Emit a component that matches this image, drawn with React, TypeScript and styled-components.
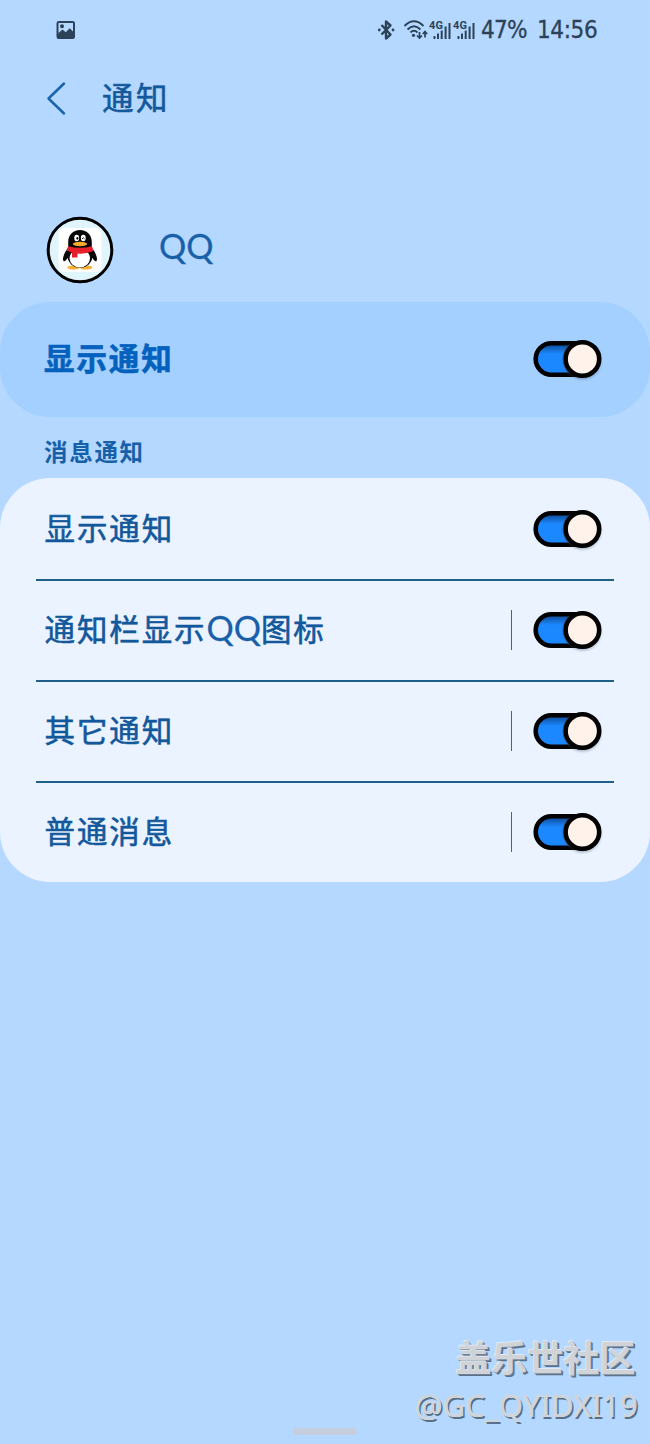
import React from "react";
import styled, { createGlobalStyle } from "styled-components";

const Global = createGlobalStyle`
  * { box-sizing: border-box; }
  body { margin: 0; background: #b4d8ff; }
`;

const cjk = `"Noto Sans CJK SC", sans-serif`;

const Screen = styled.div`
  position: relative;
  width: 650px;
  height: 1444px;
  overflow: hidden;
  background: #b4d8ff;
  color: #14589c;
  font-family: ${cjk};
  display: flex;
  flex-direction: column;
`;

const StatusBar = styled.header`
  height: 60px;
  display: flex;
  align-items: center;
  justify-content: space-between;
  padding: 0 52px 0 56px;
  color: #2c4258;
`;

const StatusGroup = styled.div`
  display: flex;
  align-items: center;
`;

const StatusText = styled.span<{ $width: number; $spacing: number }>`
  width: ${(p) => p.$width}px;
  font: 24px/30px "DejaVu Sans Condensed", "DejaVu Sans", sans-serif;
  font-stretch: condensed;
  letter-spacing: ${(p) => p.$spacing}px;
  -webkit-text-stroke: 0.3px;
  white-space: nowrap;
`;

const TitleBar = styled.div`
  height: 76px;
  display: flex;
  align-items: center;
  gap: 36px;
  padding-left: 46px;
`;

const Label = styled.span<{ $strong?: boolean; $title?: boolean }>`
  flex: 1;
  display: flex;
  align-items: center;
  padding-bottom: 4px;
  font-size: ${(p) => (p.$title ? 31.5 : 30.5)}px;
  line-height: 40px;
  letter-spacing: ${(p) => (p.$title ? 2.4 : 1.9)}px;
  font-weight: ${(p) => (p.$strong ? 700 : 400)};
  color: ${(p) => (p.$strong ? "#0461be" : "#14589c")};
  -webkit-text-stroke: 0.6px;
  white-space: nowrap;
`;

const Latin = styled.span`
  font: 34px/40px Lato, sans-serif;
  letter-spacing: 0;
  color: #1860a8;
  -webkit-text-stroke: 0.3px;
`;

const AppHeader = styled.div`
  height: 84px;
  margin-top: 72px;
  padding-left: 46px;
  display: flex;
  align-items: center;
  gap: 45px;
`;

const AppName = styled.div`
  margin-top: -9px;
`;

const MasterRow = styled.div`
  height: 115px;
  margin-top: 10px;
  border-radius: 50px;
  background: #a3d0ff;
  display: flex;
  align-items: center;
  padding: 0 48px 1px 44px;
`;

const SectionTitle = styled.h2`
  height: 61px;
  margin: 0;
  padding: 17px 0 0 44px;
  font-size: 23.5px;
  line-height: 34px;
  font-weight: 700;
  letter-spacing: 1.7px;
  color: #1760a9;
`;

const Card = styled.section`
  height: 404px;
  border-radius: 50px;
  background: #eaf3ff;
  padding: 0 36px;
`;

const Row = styled.div`
  height: 101px;
  display: flex;
  align-items: center;
  padding: 0 12px 2px 8.5px;
  &:first-child {
    height: 103px;
    padding-bottom: 0;
  }
  &:not(:last-child) {
    border-bottom: 2px solid #1f5f88;
  }
  &:last-child {
    height: 99px;
  }
`;

const Separator = styled.i`
  width: 1px;
  height: 40px;
  margin-right: 21px;
  background: #2f6c96;
`;

const Track = styled.span`
  width: 69px;
  height: 38px;
  display: flex;
  align-items: center;
  justify-content: space-between;
`;

const ToggleArt = styled.svg`
  display: block;
  overflow: visible;
`;

const Watermark = styled.div`
  position: absolute;
  right: 12px;
  bottom: 16px;
  text-align: right;
  white-space: nowrap;
  color: #d0d3d7;
  text-shadow: -1px -1px 0 #e0e9f3, 1px 1px 0 #6f8297, 2px 2px 0 #587089;
`;

const Community = styled.div`
  font: 700 36px/48px ${cjk};
  margin-right: 2.5px;
  margin-bottom: 2px;
`;

const Author = styled.div`
  font: 31px/46px "Noto Sans", sans-serif;
  letter-spacing: 0.1px;
  text-shadow: -0.5px -0.5px 0 #dce6f1, 1.5px 1.5px 0 #587089;
`;

const HomeHandle = styled.div`
  position: absolute;
  left: 293px;
  bottom: 9px;
  width: 64px;
  height: 7px;
  border-radius: 3px;
  background: #c4cedd;
`;

function Toggle() {
  return (
    <Track role="switch" aria-checked="true">
      <ToggleArt width="69" height="38" viewBox="0 0 69 38">
        <defs>
          <linearGradient id="fill" x1="0" y1="0" x2="0" y2="1">
            <stop offset="0" stopColor="#0b448b" />
            <stop offset=".34" stopColor="#1c88ff" />
            <stop offset="1" stopColor="#1c88ff" />
          </linearGradient>
          <filter id="soft" x="-30%" y="-30%" width="160%" height="170%">
            <feGaussianBlur stdDeviation="1.5" />
          </filter>
        </defs>
        <rect x="2.7" y="3.3" width="58" height="31.4" rx="15.7" fill="url(#fill)" stroke="#000" strokeWidth="4.6" />
        <circle cx="49.4" cy="21" r="18" fill="#3c5068" opacity=".5" filter="url(#soft)" />
        <circle cx="49.4" cy="19" r="16.8" fill="#fff2ea" stroke="#000" strokeWidth="4.6" />
        <path d="M36.6 4.6A19 19 0 0 0 36.6 33.4" fill="none" stroke="#454545" strokeWidth=".6" />
      </ToggleArt>
    </Track>
  );
}

function SignalIcon() {
  return (
    <svg width="24" height="22" viewBox="0 0 24 22">
      <text x="0" y="9.6" fontFamily="Roboto" fontWeight="700" fontSize="11" textLength="14" fill="currentColor">4G</text>
      <path d="M5.5 17v3M9 14.5V20M12.7 11.5V20M16.6 7.5V20M20.5 4V20" stroke="currentColor" strokeWidth="2" />
    </svg>
  );
}

function Penguin() {
  return (
    <svg width="68" height="68" viewBox="0 0 68 68">
      <circle cx="34" cy="34" r="31.8" fill="#e0f4fc" stroke="#000" strokeWidth="3" />
      <rect x="12.5" y="12" width="43" height="44" rx="6" fill="#fff" />
      <ellipse cx="27.5" cy="51.5" rx="6.2" ry="2.1" fill="#f8b032" />
      <ellipse cx="40" cy="51.5" rx="6.2" ry="2.1" fill="#f8b032" />
      <path d="M22 32C18 37 16 43 17.5 45c1 1 3-1 4-3h25c1 2 3 4 4 3 1.5-2-.5-8-4.5-13Z" fill="#080808" />
      <ellipse cx="34" cy="39.5" rx="12.6" ry="12.2" fill="#080808" />
      <ellipse cx="33.8" cy="42.3" rx="10.2" ry="9.2" fill="#fff" />
      <path d="M22.2 31V26.5C22 19 27 14 34 14S46 19 45.8 26.5V31Z" fill="#080808" />
      <ellipse cx="30.7" cy="22" rx="2.4" ry="3.2" fill="#fff" />
      <ellipse cx="37.3" cy="22" rx="2.4" ry="3.2" fill="#fff" />
      <ellipse cx="31.4" cy="22.3" rx="1" ry="1.4" fill="#000" />
      <path d="M36.1 22.8q1.2-2 2.4 0" fill="none" stroke="#000" strokeWidth=".9" />
      <ellipse cx="34" cy="28" rx="7.2" ry="2.2" fill="#f8ac2b" />
      <path d="M22 30.2Q34 33.5 46 30.2L47.4 35Q40 38.2 31.5 37.5V41.5H26V36.5L20.8 34.8Z" fill="#e51f2c" />
    </svg>
  );
}

const rows = [
  { label: <>显示通知</>, divided: false },
  { label: <>通知栏显示<Latin>QQ</Latin>图标</>, divided: true },
  { label: <>其它通知</>, divided: true },
  { label: <>普通消息</>, divided: true },
];

export default function App() {
  return (
    <Screen>
      <Global />
      <StatusBar>
        <svg width="20" height="20" viewBox="0 0 20 20">
          <path fill="currentColor" fillRule="evenodd" d="M2.5 1h14Q19 1 19 3.5v13Q19 19 16.5 19h-14Q.5 19 .5 16.5v-13Q.5 1 2.5 1ZM2.5 3v10l4-3.5 3.2 2.8 4-4 3.3 3.2V3Z" />
          <circle cx="6" cy="6.3" r="2" fill="currentColor" />
        </svg>
        <StatusGroup>
          <svg width="26" height="22" viewBox="0 0 26 22" fill="none" stroke="currentColor">
            <path d="M4.5 6 13.5 15.5 9 19.5V2.5L13.5 6.5 4.5 15.5" strokeWidth="2.4" strokeLinejoin="round" />
            <circle cx="2.3" cy="11" r="1.4" fill="currentColor" stroke="none" />
            <circle cx="16" cy="11" r="1.4" fill="currentColor" stroke="none" />
          </svg>
          <svg width="26" height="22" viewBox="0 0 26 22" fill="none" stroke="currentColor" strokeWidth="1.9">
            <path d="M1.5 7Q11 -2.5 20.5 7M4.5 10.5Q11 4 17.5 10.5M7.5 13.5Q11 10 14.5 13.5" />
            <circle cx="10.5" cy="16.3" r="1.6" fill="currentColor" stroke="none" />
            <path d="M16.5 13v6M14 16.5l2.5 2.5 2.5-2.5M22 18.5v-6M19.8 15l2.2-2.5 2.2 2.5" strokeWidth="1.7" />
          </svg>
          <SignalIcon />
          <SignalIcon />
          <StatusText $width={56} $spacing={-0.7} style={{ marginLeft: 4 }}>47%</StatusText>
          <StatusText $width={61} $spacing={-0.4}>14:56</StatusText>
        </StatusGroup>
      </StatusBar>
      <TitleBar>
        <svg width="20" height="36" viewBox="0 0 20 36">
          <path d="M18 3.5 2.5 18.5 18 33.5" fill="none" stroke="#1b63aa" strokeWidth="2.5" strokeLinecap="round" strokeLinejoin="round" />
        </svg>
        <Label $title>通知</Label>
      </TitleBar>
      <AppHeader>
        <Penguin />
        <AppName><Latin>QQ</Latin></AppName>
      </AppHeader>
      <MasterRow>
        <Label $strong>显示通知</Label>
        <Toggle />
      </MasterRow>
      <SectionTitle>消息通知</SectionTitle>
      <Card>
        {rows.map((row, i) => (
          <Row key={i}>
            <Label>{row.label}</Label>
            {row.divided && <Separator />}
            <Toggle />
          </Row>
        ))}
      </Card>
      <HomeHandle />
      <Watermark>
        <Community>盖乐世社区</Community>
        <Author>@GC_QYIDXI19</Author>
      </Watermark>
    </Screen>
  );
}
